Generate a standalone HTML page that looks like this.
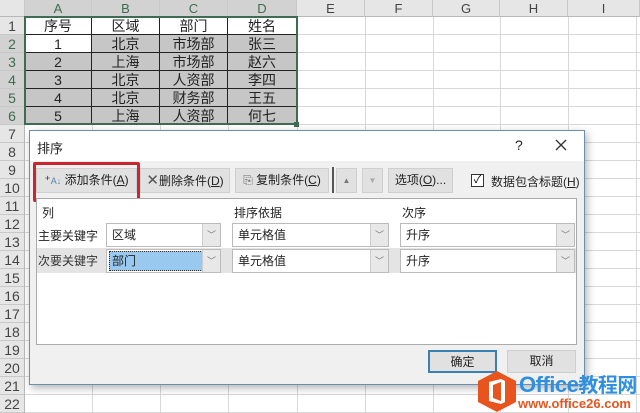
<!DOCTYPE html>
<html><head><meta charset="utf-8"><style>
*{margin:0;padding:0;box-sizing:border-box}
body{width:640px;height:413px;overflow:hidden;background:#fff;position:relative;font-family:"Liberation Sans","Noto Sans CJK SC",sans-serif;}
.a{position:absolute}
.ch{position:absolute;top:0;height:17px;background:#e6e6e6;border-right:1px solid #c8c8c8;border-bottom:1px solid #b8b8b8;font-size:13px;color:#444;text-align:center;line-height:17px}
.rh{position:absolute;left:0;width:25px;height:18px;background:#e6e6e6;border-bottom:1px solid #c8c8c8;border-right:1px solid #b8b8b8;font-size:14px;color:#444;text-align:center;line-height:18px}
.vl{position:absolute;top:17px;bottom:0;width:1px;background:#d8d8d8}
.hl{position:absolute;left:25px;right:0;height:1px;background:#d8d8d8}
.c{position:absolute;height:18px;font-size:14px;text-align:center;line-height:18px;color:#222;border-right:1px solid #222;border-bottom:1px solid #222}
.btn{position:absolute;height:25px;background:#e1e1e1;border:1px solid #cfcfcf;font-size:12px;line-height:23px;color:#222;text-align:center}
.cb{position:absolute;height:24px;background:#fff;border:1px solid #bbb;font-size:12px;line-height:22px;padding-left:5px;color:#222}
.dd{position:absolute;right:0;top:0;width:18px;height:22px;background:#e8e8e8;border-left:1px solid #ccc;color:#777;font-size:9px;text-align:center;line-height:22px}
.t{position:absolute;font-size:12px;color:#222}
</style></head><body>
<div class="vl" style="left:92px"></div><div class="vl" style="left:160px"></div><div class="vl" style="left:228px"></div><div class="vl" style="left:297px"></div><div class="vl" style="left:365px"></div><div class="vl" style="left:433px"></div><div class="vl" style="left:500px"></div><div class="vl" style="left:568px"></div><div class="vl" style="left:636px"></div>
<div class="hl" style="top:34px"></div><div class="hl" style="top:52px"></div><div class="hl" style="top:70px"></div><div class="hl" style="top:88px"></div><div class="hl" style="top:106px"></div><div class="hl" style="top:124px"></div><div class="hl" style="top:142px"></div><div class="hl" style="top:160px"></div><div class="hl" style="top:178px"></div><div class="hl" style="top:196px"></div><div class="hl" style="top:214px"></div><div class="hl" style="top:232px"></div><div class="hl" style="top:250px"></div><div class="hl" style="top:268px"></div><div class="hl" style="top:286px"></div><div class="hl" style="top:304px"></div><div class="hl" style="top:322px"></div><div class="hl" style="top:340px"></div><div class="hl" style="top:358px"></div><div class="hl" style="top:376px"></div><div class="hl" style="top:394px"></div><div class="hl" style="top:412px"></div>
<div class="ch" style="left:0;width:25px"></div>
<div class="ch" style="left:25px;width:67px;color:#3f6b50;background:#d2d2d2">A</div>
<div class="ch" style="left:92px;width:68px;color:#3f6b50;background:#d2d2d2">B</div>
<div class="ch" style="left:160px;width:68px;color:#3f6b50;background:#d2d2d2">C</div>
<div class="ch" style="left:228px;width:69px;color:#3f6b50;background:#d2d2d2">D</div>
<div class="ch" style="left:297px;width:68px">E</div>
<div class="ch" style="left:365px;width:68px">F</div>
<div class="ch" style="left:433px;width:67px">G</div>
<div class="ch" style="left:500px;width:68px">H</div>
<div class="ch" style="left:568px;width:72px">I</div>
<div class="rh" style="top:17px">1</div><div class="rh" style="top:35px;background:#d2d2d2;color:#3f6b50">2</div><div class="rh" style="top:53px;background:#d2d2d2;color:#3f6b50">3</div><div class="rh" style="top:71px;background:#d2d2d2;color:#3f6b50">4</div><div class="rh" style="top:89px;background:#d2d2d2;color:#3f6b50">5</div><div class="rh" style="top:107px;background:#d2d2d2;color:#3f6b50">6</div><div class="rh" style="top:125px">7</div><div class="rh" style="top:143px">8</div><div class="rh" style="top:161px">9</div><div class="rh" style="top:179px">10</div><div class="rh" style="top:197px">11</div><div class="rh" style="top:215px">12</div><div class="rh" style="top:233px">13</div><div class="rh" style="top:251px">14</div><div class="rh" style="top:269px">15</div><div class="rh" style="top:287px">16</div><div class="rh" style="top:305px">17</div><div class="rh" style="top:323px">18</div><div class="rh" style="top:341px">19</div><div class="rh" style="top:359px">20</div><div class="rh" style="top:377px">21</div><div class="rh" style="top:395px">22</div>
<div class="a" style="left:25px;top:17px;width:272px;height:108px;background:#fff"></div>
<div class="a" style="left:92px;top:35px;width:205px;height:90px;background:#c6c6c6"></div>
<div class="a" style="left:25px;top:53px;width:67px;height:72px;background:#c6c6c6"></div>
<div class="c" style="left:25px;top:17px;width:67px">序号</div><div class="c" style="left:92px;top:17px;width:68px">区域</div><div class="c" style="left:160px;top:17px;width:68px">部门</div><div class="c" style="left:228px;top:17px;width:69px">姓名</div>
<div class="c" style="left:25px;top:35px;width:67px">1</div><div class="c" style="left:92px;top:35px;width:68px">北京</div><div class="c" style="left:160px;top:35px;width:68px">市场部</div><div class="c" style="left:228px;top:35px;width:69px">张三</div>
<div class="c" style="left:25px;top:53px;width:67px">2</div><div class="c" style="left:92px;top:53px;width:68px">上海</div><div class="c" style="left:160px;top:53px;width:68px">市场部</div><div class="c" style="left:228px;top:53px;width:69px">赵六</div>
<div class="c" style="left:25px;top:71px;width:67px">3</div><div class="c" style="left:92px;top:71px;width:68px">北京</div><div class="c" style="left:160px;top:71px;width:68px">人资部</div><div class="c" style="left:228px;top:71px;width:69px">李四</div>
<div class="c" style="left:25px;top:89px;width:67px">4</div><div class="c" style="left:92px;top:89px;width:68px">北京</div><div class="c" style="left:160px;top:89px;width:68px">财务部</div><div class="c" style="left:228px;top:89px;width:69px">王五</div>
<div class="c" style="left:25px;top:107px;width:67px">5</div><div class="c" style="left:92px;top:107px;width:68px">上海</div><div class="c" style="left:160px;top:107px;width:68px">人资部</div><div class="c" style="left:228px;top:107px;width:69px">何七</div>
<div class="a" style="left:24px;top:16px;width:274px;height:109px;border:2px solid #3f6b50"></div>
<div class="a" style="left:294px;top:122px;width:5px;height:5px;background:#3f6b50"></div>
<div class="a" style="left:29px;top:130px;width:556px;height:255px;background:#f0f0f0;border:1px solid #6b8fb0;box-shadow:2px 3px 8px rgba(0,0,0,.3)"></div>
<div class="a" style="left:30px;top:131px;width:554px;height:30px;background:#fff"></div>
<div class="t" style="left:37px;top:138px;font-size:13px">排序</div>
<div class="t" style="left:515px;top:137px;font-size:14px">?</div>
<svg class="a" style="left:555px;top:139px" width="12" height="12"><path d="M1 1L11 11M11 1L1 11" stroke="#333" stroke-width="1.3"/></svg>
<div class="btn" style="left:36px;top:168px;width:101px">⁺<span style="font-size:9px;color:#5a7fb0">A↓</span> 添加条件(<u>A</u>)</div>
<div class="a" style="left:33px;top:162px;width:107px;height:40px;border:3px solid #c8282d;border-radius:2px"></div>
<div class="btn" style="left:140px;top:168px;width:90px"><span style="font-size:15px;color:#555">✕</span>删除条件(<u>D</u>)</div>
<div class="btn" style="left:235px;top:168px;width:94px"><span style="color:#666">⎘</span> 复制条件(<u>C</u>)</div>
<div class="a" style="left:332px;top:167px;width:2px;height:26px;background:#555"></div>
<div class="btn" style="left:336px;top:168px;width:21px;font-size:8px;color:#777">▲</div>
<div class="btn" style="left:362px;top:168px;width:21px;font-size:8px;color:#aaa">▼</div>
<div class="btn" style="left:388px;top:168px;width:65px">选项(<u>O</u>)...</div>
<div class="a" style="left:471px;top:174px;width:13px;height:13px;border:1px solid #333;background:#fff;font-size:11px;line-height:11px;text-align:center">✓</div>
<div class="t" style="left:491px;top:173px">数据包含标题(<u>H</u>)</div>
<div class="a" style="left:36px;top:198px;width:541px;height:147px;background:#fff;border:1px solid #aaa"></div>
<div class="a" style="left:37px;top:248px;width:539px;height:25px;background:#e4e4e4"></div>
<div class="t" style="left:42px;top:204px">列</div>
<div class="t" style="left:234px;top:204px">排序依据</div>
<div class="t" style="left:402px;top:204px">次序</div>
<div class="t" style="left:38px;top:227px">主要关键字</div>
<div class="t" style="left:38px;top:252px;color:#333">次要关键字</div>
<div class="cb" style="left:106px;top:223px;width:115px">区域<div class="dd">﹀</div></div>
<div class="cb" style="left:232px;top:223px;width:157px">单元格值<div class="dd">﹀</div></div>
<div class="cb" style="left:400px;top:223px;width:175px">升序<div class="dd">﹀</div></div>
<div class="cb" style="left:106px;top:249px;width:115px;padding-left:2px"><span style="display:inline-block;width:94px;height:20px;background:#99c9ef;border:1px dotted #333;line-height:18px;margin-top:1px;padding-left:2px">部门</span><div class="dd">﹀</div></div>
<div class="cb" style="left:232px;top:249px;width:157px">单元格值<div class="dd">﹀</div></div>
<div class="cb" style="left:400px;top:249px;width:175px">升序<div class="dd">﹀</div></div>
<div class="btn" style="left:428px;top:350px;width:69px;height:23px;line-height:20px;border:2px solid #3c7fb1">确定</div>
<div class="btn" style="left:507px;top:350px;width:69px;height:23px;line-height:21px">取消</div>
<svg class="a" style="left:476px;top:370px" width="42" height="43" viewBox="0 0 42 43"><polygon points="21,1 40,11 40,32 21,42 2,32 2,11" fill="#e8541e"/><path d="M13 12 L25 9 L29 11 L29 32 L25 34 L13 31 Z M17 15 V28 L25 31 V12 Z" fill="#fff" fill-rule="evenodd"/></svg>
<div class="a" style="left:519px;top:369px;font-size:22px;font-weight:bold;color:#2f8fe0;letter-spacing:-0.5px;white-space:nowrap">Office<span style="font-size:20px">教程网</span></div>
<div class="a" style="left:518px;top:396px;font-size:13px;font-weight:bold;color:#e8541e;white-space:nowrap">www.office26.com</div>
</body></html>
